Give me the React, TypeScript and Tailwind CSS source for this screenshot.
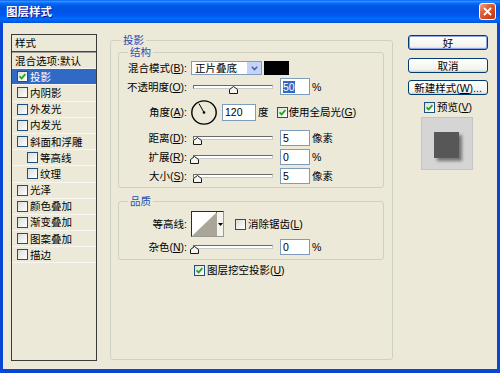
import React from "react";

const U = ({ children }: { children: React.ReactNode }) => (
  <span className="underline underline-offset-[1px]">{children}</span>
);

function Check({ checked = false }: { checked?: boolean }) {
  return (
    <span className="inline-flex items-center justify-center w-[11px] h-[11px] shrink-0 border border-[#1c5180] bg-[linear-gradient(135deg,#dcdcd7,#ffffff)]">
      {checked && (
        <svg width="7" height="7" viewBox="0 0 7 7">
          <path d="M0.6 3.3 L2.6 5.4 L6.4 1.1" fill="none" stroke="#21a121" strokeWidth="1.7" />
        </svg>
      )}
    </span>
  );
}

function Slider({ thumb }: { thumb: number }) {
  return (
    <div className="relative w-[80px] h-[16px] shrink-0">
      <div className="absolute left-0 top-[6px] w-[80px] h-[4px] border border-[#6a6a6a] border-b-[#c8c8c8] border-r-[#c8c8c8] bg-white" />
      <svg className="absolute top-[7px]" style={{ left: thumb }} width="9" height="8" viewBox="0 0 9 8">
        <path d="M4.5 0.5 L8.5 3.5 L8.5 7.5 L0.5 7.5 L0.5 3.5 Z" fill="#f6f5f0" stroke="#1a1a1a" strokeWidth="1" />
      </svg>
    </div>
  );
}

function Input({ children, className = "" }: { children: React.ReactNode; className?: string }) {
  return (
    <div className={`shrink-0 border border-[#7f9db9] bg-white flex items-center pl-[2px] leading-[12px] ${className}`}>
      {children}
    </div>
  );
}

function Label({ children }: { children: React.ReactNode }) {
  return <span className="w-[68px] shrink-0 text-right leading-[12px] whitespace-nowrap">{children}</span>;
}

function Btn({ children, className = "", def = false }: { children: React.ReactNode; className?: string; def?: boolean }) {
  return (
    <div
      className={`h-[15px] w-[80px] rounded-[3px] border border-[#003c74] bg-[linear-gradient(to_bottom,#ffffff,#f3f3ee_80%,#d6d0c5)] flex items-center justify-center leading-[12px] whitespace-nowrap ${
        def ? "shadow-[inset_0_0_0_1px_#8aa5e8]" : ""
      } ${className}`}
    >
      {children}
    </div>
  );
}

const items: { t: string; c?: boolean; sel?: boolean; ind?: boolean }[] = [
  { t: "投影", c: true, sel: true },
  { t: "内阴影" },
  { t: "外发光" },
  { t: "内发光" },
  { t: "斜面和浮雕" },
  { t: "等高线", ind: true },
  { t: "纹理", ind: true },
  { t: "光泽" },
  { t: "颜色叠加" },
  { t: "渐变叠加" },
  { t: "图案叠加" },
  { t: "描边" },
];

function List() {
  return (
    <div className="ml-[8px] mt-[11px] w-[86px] h-[327px] shrink-0 border border-[#3a3a3a] bg-[#ece9d8] flex flex-col">
      <div className="h-[16px] pl-[3px] flex items-center leading-[12px]">样式</div>
      <div className="h-[1px] bg-[#444]" />
      <div className="h-[1px] bg-[#9a9a9a]" />
      <div className="h-[16.2px] pl-[3px] flex items-center leading-[12px] border-b border-[#f7f6f1]">混合选项:默认</div>
      {items.map((it) => (
        <div
          key={it.t}
          className={`h-[16.2px] flex items-center leading-[12px] border-b border-[#f7f6f1] ${
            it.ind ? "pl-[15px]" : "pl-[5px]"
          } ${it.sel ? "bg-[#316ac5] text-white" : ""}`}
        >
          <Check checked={it.c} />
          <span className="ml-[2px]">{it.t}</span>
        </div>
      ))}
    </div>
  );
}

function Dial() {
  return (
    <svg className="ml-[4px] shrink-0" width="26" height="25" viewBox="0 0 26 25">
      <ellipse cx="13" cy="12.5" rx="12.2" ry="11.6" fill="#ffffff" fillOpacity="0" stroke="#000" strokeWidth="1.4" />
      <line x1="13" y1="12.5" x2="8" y2="3.6" stroke="#000" strokeWidth="1" />
      <circle cx="13" cy="12.5" r="1.3" fill="#000" />
    </svg>
  );
}

function Contour() {
  return (
    <div className="ml-[4px] w-[33px] h-[26px] shrink-0 flex border border-[#2a2a2a] border-b-[#9a9a9a] border-r-[#9a9a9a] bg-white">
      <div className="w-[25px] h-full border-r border-[#2a2a2a]">
        <svg width="25" height="24" viewBox="0 0 25 24">
          <polygon points="25,0 25,24 0,24" fill="#a9a598" />
        </svg>
      </div>
      <div className="flex-1 flex items-center justify-center bg-[#f4f3ee]">
        <svg width="5" height="3" viewBox="0 0 5 3">
          <polygon points="0,0 5,0 2.5,3" fill="#000" />
        </svg>
      </div>
    </div>
  );
}

function Main() {
  return (
    <fieldset className="ml-[13px] mt-[11px] w-[283px] h-[326px] shrink-0 border border-[#d0d0bf] rounded-[3px] pl-[7px]">
      <legend className="ml-[3px] px-[2px] leading-[12px] text-[#1f4fb5]">投影</legend>
      <fieldset className="w-[266px] border border-[#d0d0bf] rounded-[3px] pb-[3px]">
        <legend className="ml-[9px] px-[2px] leading-[12px] text-[#1f4fb5]">结构</legend>
        <div className="mt-[3px] h-[14px] flex items-center">
          <Label>
            混合模式(<U>B</U>):
          </Label>
          <div className="ml-[4px] w-[71px] h-[14px] border border-[#7f9db9] bg-white flex items-center">
            <span className="pl-[3px] flex-1 leading-[12px]">正片叠底</span>
            <span className="w-[14px] h-[12px] bg-[#c3d3fd] flex items-center justify-center">
              <svg width="7" height="5" viewBox="0 0 7 5">
                <path d="M0.8 0.8 L3.5 3.6 L6.2 0.8" fill="none" stroke="#4d6185" strokeWidth="1.5" />
              </svg>
            </span>
          </div>
          <div className="ml-[2px] w-[25px] h-[14px] bg-black" />
        </div>
        <div className="mt-[3px] h-[17px] flex items-center">
          <Label>
            不透明度(<U>O</U>):
          </Label>
          <div className="ml-[6px]">
            <Slider thumb={36} />
          </div>
          <Input className="ml-[7px] w-[30px] h-[17px]">
            <span className="bg-[#316ac5] text-white">50</span>
          </Input>
          <span className="ml-[2px] leading-[12px]">%</span>
        </div>
        <div className="mt-[4px] h-[26px] flex items-center">
          <Label>
            角度(<U>A</U>):
          </Label>
          <Dial />
          <Input className="ml-[5px] w-[34px] h-[17px]">120</Input>
          <span className="ml-[2px] leading-[12px]">度</span>
          <span className="ml-[8px] flex">
            <Check checked />
          </span>
          <span className="ml-[1px] leading-[12px] whitespace-nowrap">
            使用全局光(<U>G</U>)
          </span>
        </div>
        <div className="mt-[5px] h-[16px] flex items-center">
          <Label>
            距离(<U>D</U>):
          </Label>
          <div className="ml-[6px]">
            <Slider thumb={0} />
          </div>
          <Input className="ml-[7px] w-[30px] h-[16px]">5</Input>
          <span className="ml-[2px] leading-[12px]">像素</span>
        </div>
        <div className="mt-[3px] h-[16px] flex items-center">
          <Label>
            扩展(<U>R</U>):
          </Label>
          <div className="ml-[6px]">
            <Slider thumb={-3} />
          </div>
          <Input className="ml-[7px] w-[30px] h-[16px]">0</Input>
          <span className="ml-[2px] leading-[12px]">%</span>
        </div>
        <div className="mt-[3px] h-[16px] flex items-center">
          <Label>
            大小(<U>S</U>):
          </Label>
          <div className="ml-[6px]">
            <Slider thumb={0} />
          </div>
          <Input className="ml-[7px] w-[30px] h-[16px]">5</Input>
          <span className="ml-[2px] leading-[12px]">像素</span>
        </div>
      </fieldset>
      <fieldset className="mt-[7px] w-[266px] border border-[#d0d0bf] rounded-[3px] pb-[4px]">
        <legend className="ml-[9px] px-[2px] leading-[12px] text-[#1f4fb5]">品质</legend>
        <div className="mt-[4px] h-[26px] flex items-center">
          <Label>等高线:</Label>
          <Contour />
          <span className="ml-[11px] flex">
            <Check />
          </span>
          <span className="ml-[2px] leading-[12px] whitespace-nowrap">
            消除锯齿(<U>L</U>)
          </span>
        </div>
        <div className="mt-[2px] h-[16px] flex items-center">
          <Label>
            杂色(<U>N</U>):
          </Label>
          <div className="ml-[6px]">
            <Slider thumb={-3} />
          </div>
          <Input className="ml-[7px] w-[30px] h-[16px]">0</Input>
          <span className="ml-[2px] leading-[12px]">%</span>
        </div>
      </fieldset>
      <div className="mt-[4px] h-[12px] flex items-center pl-[76px]">
        <Check checked />
        <span className="ml-[2px] leading-[12px] whitespace-nowrap">
          图层挖空投影(<U>U</U>)
        </span>
      </div>
    </fieldset>
  );
}

function RightCol() {
  return (
    <div className="ml-[15px] w-[80px] shrink-0 flex flex-col">
      <Btn className="mt-[12px]" def>
        好
      </Btn>
      <Btn className="mt-[8px]">取消</Btn>
      <Btn className="mt-[7px]">
        新建样式(<U>W</U>)...
      </Btn>
      <div className="mt-[6px] h-[12px] flex items-center pl-[16px]">
        <Check checked />
        <span className="ml-[2px] leading-[12px] whitespace-nowrap">
          预览(<U>V</U>)
        </span>
      </div>
      <div className="mt-[4px] ml-[13px] w-[52px] h-[53px] bg-[#d5d5d5] border border-[#c4c4c4] pl-[12px] pt-[14px]">
        <div className="w-[25px] h-[26px] bg-[#575757] shadow-[3px_3px_3px_rgba(0,0,0,0.45)]" />
      </div>
    </div>
  );
}

export default function App() {
  return (
    <div className="w-[500px] h-[373px] flex flex-col bg-[#0a46d5] text-[10.5px] text-black font-['Liberation_Sans','Noto_Sans_CJK_SC',sans-serif]">
      <div className="h-[23px] shrink-0 flex items-center bg-[linear-gradient(to_bottom,#0058ee_0%,#3593ff_5%,#288eff_8%,#127dff_11%,#036ffc_14%,#0262ee_20%,#0057e5_28%,#0054e3_34%,#0055eb_60%,#005bf5_70%,#026afe_80%,#0062ef_90%,#0052d6_100%)]">
        <span className="pl-[6px] text-white font-bold text-[11.5px] leading-[14px] [text-shadow:1px_1px_#0f1089]">
          图层样式
        </span>
        <div className="ml-auto mr-[4px] w-[17px] h-[17px] rounded-[3px] border border-white bg-[linear-gradient(135deg,#f3a68a_0%,#e0643a_35%,#d5461c_70%,#b93510_100%)] flex items-center justify-center">
          <svg width="9" height="9" viewBox="0 0 9 9">
            <path d="M1 1 L8 8 M8 1 L1 8" stroke="#fff" strokeWidth="1.8" />
          </svg>
        </div>
      </div>
      <div className="mx-[3px] mb-[4px] flex-1 bg-[#ece9d8] flex items-start">
        <List />
        <Main />
        <RightCol />
      </div>
    </div>
  );
}
